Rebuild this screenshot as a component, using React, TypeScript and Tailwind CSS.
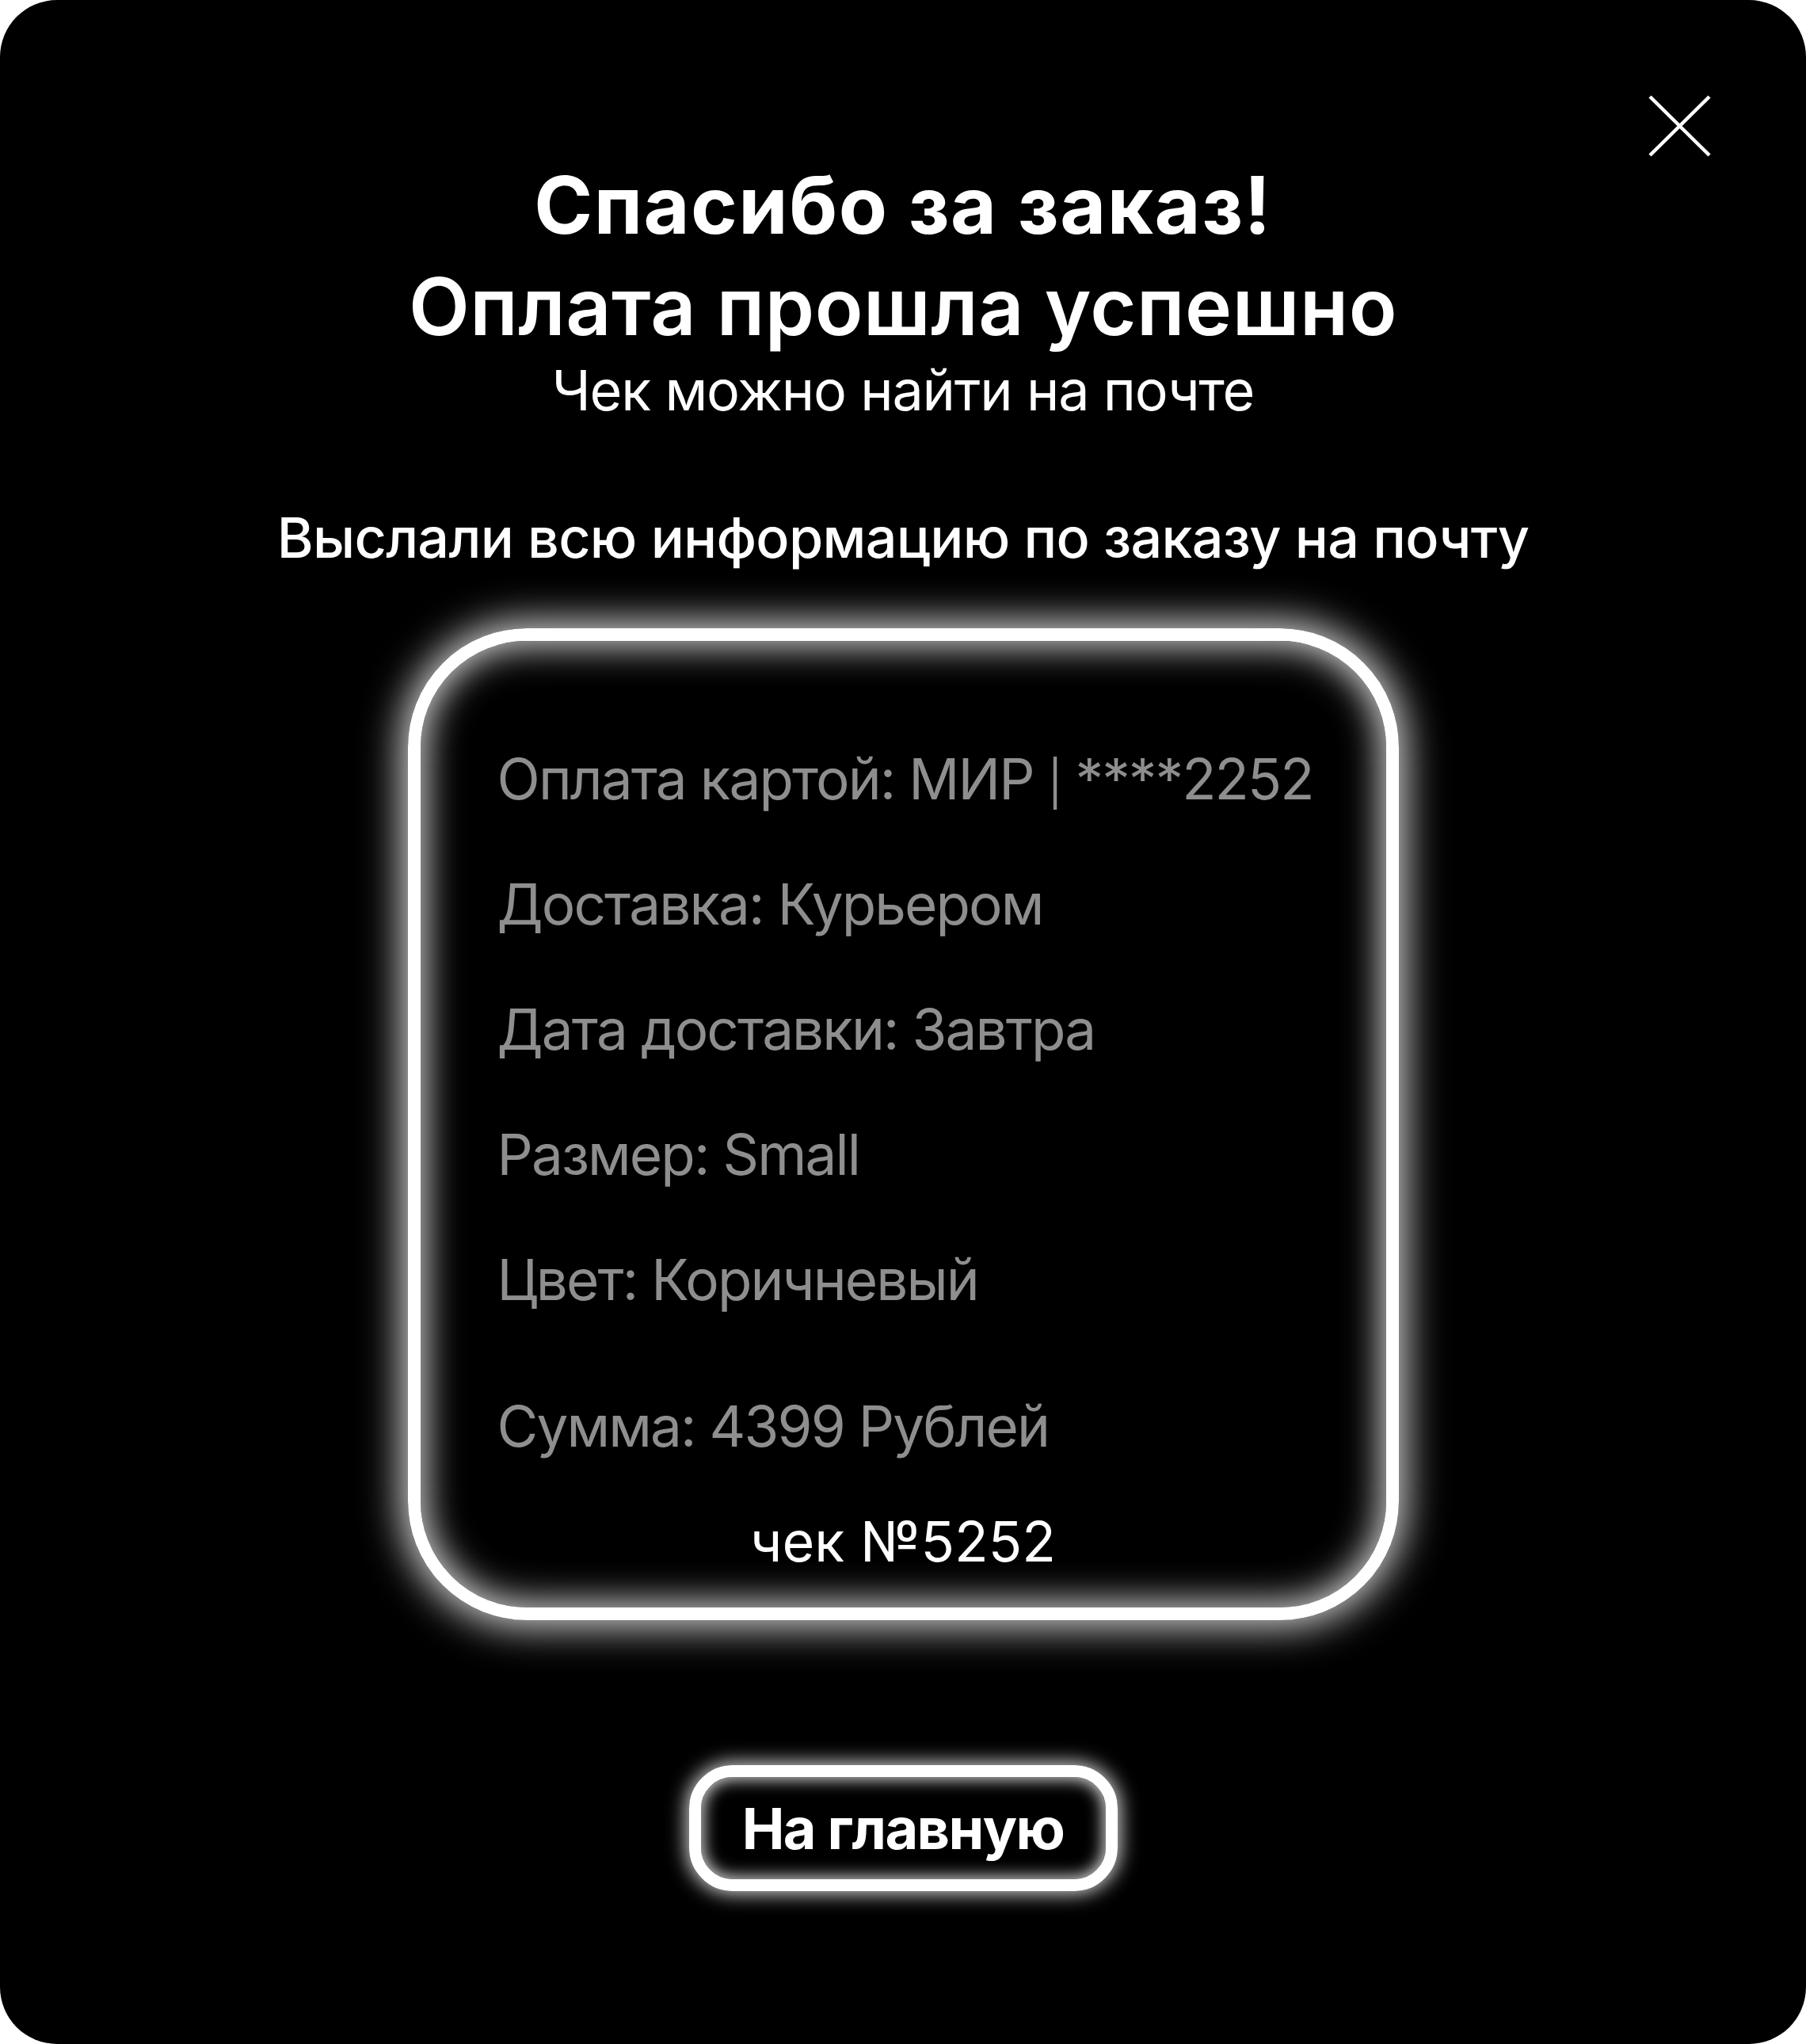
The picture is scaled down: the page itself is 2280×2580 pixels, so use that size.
const ROWS = [
  'Доставка: Курьером',
  'Дата доставки: Завтра',
  'Размер: Small',
  'Цвет: Коричневый',
];

function CloseIcon() {
  return (
    <svg viewBox="0 0 79 78" className="w-[79px] h-[78px]" fill="none">
      <path d="M2 2 L77 76 M77 2 L2 76" stroke="white" strokeWidth="4.5" />
    </svg>
  );
}

export default function App() {
  return (
    <div className="w-[2280px] h-[2580px] bg-white font-['Inter',sans-serif]">
      <div className="relative h-full rounded-[72px] bg-black flex flex-col items-center text-white">
        {/* Close */}
        <button className="absolute top-[120px] right-[120px]" aria-label="close">
          <CloseIcon />
        </button>

        {/* Heading */}
        <div className="mt-[195px] flex flex-col items-center text-center">
          <h1 className="text-[100px] leading-[128px] font-bold tracking-[1.5px]">Спасибо за заказ!</h1>
          <h2 className="text-[100px] leading-[128px] font-semibold tracking-[0.5px]">
            Оплата прошла успешно
          </h2>
          <p className="text-[70px] leading-[84px] font-normal tracking-[-1.2px]">
            Чек можно найти на почте
          </p>
          <p className="mt-[102px] text-[70px] leading-[84px] font-medium tracking-[-0.7px]">
            Выслали всю информацию по заказу на почту
          </p>
        </div>

        {/* Order card */}
        <div
          className="mt-[72px] w-[1251px] h-[1252px] rounded-[150px] border-[16px] border-white
            shadow-[0_0_50px_8px_rgba(255,255,255,0.85),inset_0_0_46px_6px_rgba(255,255,255,0.85)]
            pt-[95px] pl-[97px] flex flex-col"
        >
          <div className="h-[158px] text-[71px] leading-[158px] tracking-[-1.9px] text-[#8e8e8e]">
            Оплата картой: МИР <span className="text-[56px] leading-[0]">|</span> ****2252
          </div>
          {ROWS.map((row) => (
            <div key={row} className="text-[71px] leading-[158px] tracking-[-1.9px] text-[#8e8e8e]">
              {row}
            </div>
          ))}
          <div className="mt-[27px] text-[71px] leading-[158px] tracking-[-1.9px] text-[#8e8e8e]">
            Сумма: 4399 Рублей
          </div>
          <div className="mt-[25px] -ml-[97px] text-center text-[70px] leading-[84px] text-white">
            чек №5252
          </div>
        </div>

        {/* Home button */}
        <button
          className="mt-[183px] w-[541px] h-[159px] rounded-[55px] border-[15px] border-white
            shadow-[0_0_24px_3px_rgba(255,255,255,0.85),inset_0_0_20px_3px_rgba(255,255,255,0.85)]
            flex items-center justify-center text-[72px] font-bold tracking-[-1.6px] text-white"
        >
          На главную
        </button>
      </div>
    </div>
  );
}
